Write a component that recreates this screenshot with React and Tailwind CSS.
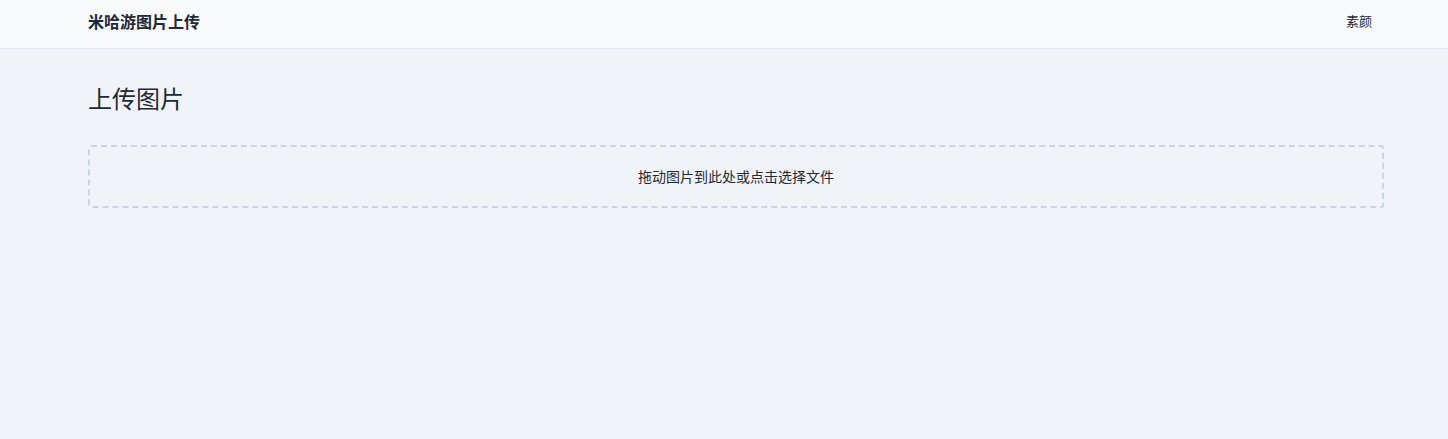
import React from 'react'

export default function App() {
  return (
    <div className="min-h-screen bg-[#f0f4f8] text-[#1f2937]" style={{ fontFamily: '"Noto Sans CJK SC", "Noto Sans", sans-serif' }}>
      {/* Header */}
      <header className="h-[49px] bg-[#f8fafc] border-b border-[#e2e8f0]">
        <div className="flex items-start justify-between pl-[88px] pr-[76px] pt-[9px]">
          <span className="text-[16px] leading-[24px] font-bold text-[#1f2937]">米哈游图片上传</span>
          <span className="text-[13px] leading-[24px] text-[#1f2937]">素颜</span>
        </div>
      </header>
      {/* Main */}
      <main className="pl-[88px] pr-[64px] pt-[29px]">
        <h1 className="text-[24px] leading-[40px] text-[#1f2937]">上传图片</h1>
        <div className="mt-[27px] h-[63px] border-2 border-dashed border-[#cbd5e1] rounded-[3px] flex items-center justify-center">
          <span className="text-[14px] text-[#1f2937]">拖动图片到此处或点击选择文件</span>
        </div>
      </main>
    </div>
  )
}
